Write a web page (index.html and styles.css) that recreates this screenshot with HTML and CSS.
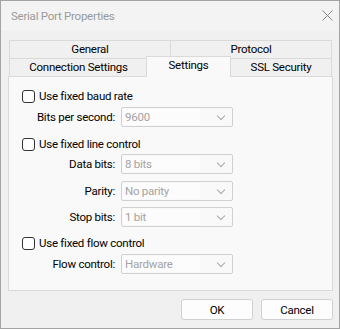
FILE: index.html
```html
<!DOCTYPE html>
<html lang="en">
<head>
    <meta charset="UTF-8">
    <meta name="viewport" content="width=device-width, initial-scale=1.0">
    <title>Serial Port Properties</title>

    <link rel="stylesheet" href="styles.css">
</head>
<body>
    <section class="dialog">
        <header class="titlebar">
            <span class="titlebar__title">Serial Port Properties</span>
            <svg class="titlebar__close" width="11" height="11" viewBox="0 0 11 11">
                <path d="M0.5 0.5 L10.5 10.5 M10.5 0.5 L0.5 10.5" stroke="#8a8a8a" stroke-width="1" fill="none"/>
            </svg>
        </header>
        <main class="dialog__body">
            <div class="tabs">
                <div class="tabs__row">
                    <div class="tab tab--half">General</div>
                    <div class="tab tab--half">Protocol</div>
                </div>
                <div class="tabs__row">
                    <div class="tab tab--connection">Connection Settings</div>
                    <div class="tab tab--active">Settings</div>
                    <div class="tab tab--ssl">SSL Security</div>
                </div>
            </div>

            <div class="panel">
                <label class="check check--baud">
                    <span class="check__box"></span>
                    <span>Use fixed baud rate</span>
                </label>
                <div class="field field--after-check">
                    <span class="field__label">Bits per second:</span>
                    <div class="combo"><span class="combo__text">9600</span><span class="combo__arrow"></span></div>
                </div>

                <label class="check check--line">
                    <span class="check__box"></span>
                    <span>Use fixed line control</span>
                </label>
                <div class="field field--first">
                    <span class="field__label">Data bits:</span>
                    <div class="combo"><span class="combo__text">8 bits</span><span class="combo__arrow"></span></div>
                </div>
                <div class="field field--parity">
                    <span class="field__label">Parity:</span>
                    <div class="combo"><span class="combo__text">No parity</span><span class="combo__arrow"></span></div>
                </div>
                <div class="field field--stop">
                    <span class="field__label">Stop bits:</span>
                    <div class="combo"><span class="combo__text">1 bit</span><span class="combo__arrow"></span></div>
                </div>

                <label class="check check--flow">
                    <span class="check__box"></span>
                    <span>Use fixed flow control</span>
                </label>
                <div class="field field--after-check">
                    <span class="field__label">Flow control:</span>
                    <div class="combo"><span class="combo__text">Hardware</span><span class="combo__arrow"></span></div>
                </div>
            </div>

            <footer class="buttons">
                <button class="button">OK</button>
                <button class="button">Cancel</button>
            </footer>
        </main>
    </section>
</body>
</html>
```

FILE: styles.css
```css
* {
    margin: 0;
    padding: 0;
    box-sizing: border-box;
}

body {
    background-color: #f0f0f0;
    font-family: Roboto, 'Liberation Sans', sans-serif;
    font-size: 11.5px;
    letter-spacing: -0.25px;
    color: #000;
}

.dialog {
    width: 340px;
    height: 329px;
    border: 1px solid #a3a3a3;
    background-color: #f0f0f0;
}

.titlebar {
    height: 30px;
    display: flex;
    align-items: center;
    justify-content: space-between;
    padding: 0 6px 1px 10px;
    background-color: #f3f3f3;
}

.titlebar__title {
    color: #9a9a9a;
}

.dialog__body {
    padding: 9px 6px 0 7px;
}

/* tabs */

.tabs__row {
    display: flex;
    height: 18px;
    margin: 0 1px;
    align-items: flex-start;
}

.tab {
    height: 18px;
    line-height: 17px;
    text-align: center;
    background-color: #f0f0f0;
    border: 1px solid #dadada;
    border-bottom: none;
    white-space: nowrap;
}

.tab + .tab {
    margin-left: -1px;
}

.tab--half {
    flex: 1;
}

.tab--connection {
    width: 139px;
}

.tab--active {
    position: relative;
    z-index: 1;
    width: 85px;
    height: 21px;
    margin-top: -2px;
    background-color: #f9f9f9;
}

.tab + .tab--active {
    margin-left: -2px;
}

.tab--ssl {
    width: 102px;
}

/* panel */

.panel {
    height: 215px;
    background-color: #f9f9f9;
    border: 1px solid #dadada;
    padding: 10px 0 0 13px;
}

.check {
    display: flex;
    align-items: center;
    height: 18px;
}

.check__box {
    width: 13px;
    height: 13px;
    border: 1px solid #333;
    border-radius: 3px;
    background-color: #fff;
    margin-right: 4px;
}

.check--line {
    margin-top: 8px;
}

.check--flow {
    margin-top: 7px;
}

.field {
    display: flex;
    align-items: center;
    height: 20px;
    margin-left: -13px;
}

.field--after-check {
    margin-top: 2px;
}

.field--first {
    margin-top: 1px;
}

.field--parity {
    margin-top: 7px;
}

.field--stop {
    margin-top: 6px;
}

.field__label {
    width: 106px;
    text-align: right;
    margin-right: 6px;
}

.combo {
    width: 112px;
    height: 20px;
    display: flex;
    align-items: center;
    border: 1px solid #d0d0d0;
    border-radius: 2px;
    background-color: #f9f9f9;
    padding: 1px;
}

.combo__text {
    flex: 1;
    height: 16px;
    line-height: 16px;
    padding-left: 2px;
    color: #a3a3a3;
    background-color: #fcfcfc;
    margin-right: 18px;
}

.combo__arrow {
    width: 6px;
    height: 6px;
    border-right: 1px solid #a8a8a8;
    border-bottom: 1px solid #a8a8a8;
    transform: rotate(45deg);
    margin: -3px 7px 0 0;
}

/* buttons */

.buttons {
    display: flex;
    justify-content: flex-end;
    gap: 8px;
    margin-top: 8px;
}

.button {
    width: 72px;
    height: 21px;
    font-family: inherit;
    font-size: inherit;
    letter-spacing: inherit;
    color: #000;
    background-color: #fdfdfd;
    border: 1px solid #d0d0d0;
    border-radius: 3px;
}
```
